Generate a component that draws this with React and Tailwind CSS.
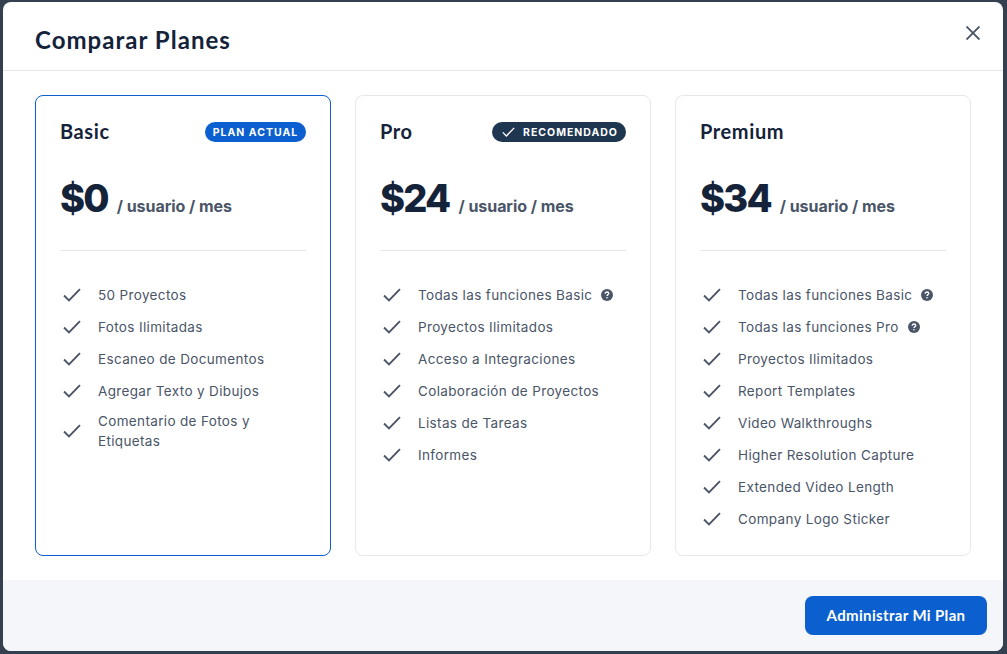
const plans = [
  {
    name: "Basic",
    price: "$0",
    current: true,
    features: [
      { text: "50 Proyectos" },
      { text: "Fotos Ilimitadas" },
      { text: "Escaneo de Documentos" },
      { text: "Agregar Texto y Dibujos" },
      { text: "Comentario de Fotos y Etiquetas" },
    ],
  },
  {
    name: "Pro",
    price: "$24",
    recommended: true,
    features: [
      { text: "Todas las funciones Basic", help: true },
      { text: "Proyectos Ilimitados" },
      { text: "Acceso a Integraciones" },
      { text: "Colaboración de Proyectos" },
      { text: "Listas de Tareas" },
      { text: "Informes" },
    ],
  },
  {
    name: "Premium",
    price: "$34",
    features: [
      { text: "Todas las funciones Basic", help: true },
      { text: "Todas las funciones Pro", help: true },
      { text: "Proyectos Ilimitados" },
      { text: "Report Templates" },
      { text: "Video Walkthroughs" },
      { text: "Higher Resolution Capture" },
      { text: "Extended Video Length" },
      { text: "Company Logo Sticker" },
    ],
  },
];

function Check({ className }) {
  return (
    <svg viewBox="0 0 18 14" fill="none" stroke="currentColor" strokeWidth="1.9" className={className}>
      <path d="M1 7.5 L6 12.5 L17 1.2" />
    </svg>
  );
}

function Help() {
  return (
    <svg viewBox="0 0 12 12" className="w-3 h-3 ml-[9px] shrink-0">
      <circle cx="6" cy="6" r="6" fill="#4a5568" />
      <path d="M4.2 4.7 C4.2 3.6 5 3 6 3 C7 3 7.8 3.6 7.8 4.5 C7.8 5.6 6 5.7 6 7" fill="none" stroke="#fff" strokeWidth="1.3" />
      <circle cx="6" cy="8.8" r="0.8" fill="#fff" />
    </svg>
  );
}

export default function App() {
  return (
    <div className="w-[1007px] h-[654px] overflow-hidden bg-[#344050] pl-[3px] pr-[4px] pt-[2px] pb-[3px] font-['Inter',sans-serif]">
      <div className="h-full flex flex-col bg-white rounded-[8px] overflow-hidden">
        {/* Header */}
        <header className="h-[69px] shrink-0 border-b border-[#e5e7eb] flex items-center justify-between pl-[32px] pr-[23px]">
          <h1 className="mt-[8px] font-['Lato',sans-serif] text-[24px] font-bold text-[#14233a] tracking-[1.03px]">Comparar Planes</h1>
          <button className="text-[#4a5568] -mt-[6px]">
            <svg viewBox="0 0 14 14" fill="none" stroke="currentColor" strokeWidth="1.9" className="w-[14px] h-[14px]">
              <path d="M0.5 0.5 L13.5 13.5 M13.5 0.5 L0.5 13.5" />
            </svg>
          </button>
        </header>

        {/* Plans */}
        <main className="flex-1 grid grid-cols-[296px_296px_296px] gap-6 px-[32px] pt-[24px] pb-[24px]">
          {plans.map((plan) => (
            <div
              key={plan.name}
              className={`rounded-[8px] border px-[24px] pt-[26px] ${plan.current ? "border-[#0b5fce]" : "border-[#e5e7eb]"}`}
            >
              <div className="h-[20px] flex items-center justify-between">
                <h2 className="-mt-[2px] font-['Lato',sans-serif] text-[20px] font-bold text-[#14233a] tracking-[0.6px]">{plan.name}</h2>
                {plan.current && (
                  <span className="h-[20px] w-[101px] pt-px flex items-center justify-center rounded-full bg-[#0b5fce] text-white text-[10.5px] font-bold tracking-[1px]">
                    PLAN ACTUAL
                  </span>
                )}
                {plan.recommended && (
                  <span className="h-[20px] w-[134px] pt-px pl-[2px] flex items-center justify-center gap-[8px] rounded-full bg-[#1e3650] text-white text-[10.5px] font-bold tracking-[1px]">
                    <Check className="w-[13px] h-[10px] -mt-px" />
                    RECOMENDADO
                  </span>
                )}
              </div>
              <div className="mt-[30px] h-[52px] flex items-center">
                <span className="text-[38px] font-extrabold text-[#14233a] tracking-[-1.8px]">{plan.price}</span>
                <span className="ml-[9px] mt-[16px] text-[16px] font-bold text-[#4a5568] tracking-[-0.05px]">/ usuario / mes</span>
              </div>
              <div className="mt-[26px] border-t border-[#e5e7eb]" />
              <ul className="mt-[32px] flex flex-col gap-2">
                {plan.features.map((f) => (
                  <li key={f.text} className="min-h-[24px] flex items-center text-[13.5px] leading-[20px] text-[#4a5568] tracking-[0.35px]">
                    <Check className="w-[18px] h-[14px] ml-[3px] mr-[17px] shrink-0 text-[#4a5568]" />
                    <span>{f.text}</span>
                    {f.help && <Help />}
                  </li>
                ))}
              </ul>
            </div>
          ))}
        </main>

        {/* Footer */}
        <footer className="h-[71px] shrink-0 bg-[#f4f6fa] flex items-center justify-end pr-[16px]">
          <button className="h-[39px] w-[182px] rounded-[8px] bg-[#0b5fce] text-white text-[15px] font-bold font-['Lato',sans-serif] tracking-[0.35px]">
            Administrar Mi Plan
          </button>
        </footer>
      </div>
    </div>
  );
}
